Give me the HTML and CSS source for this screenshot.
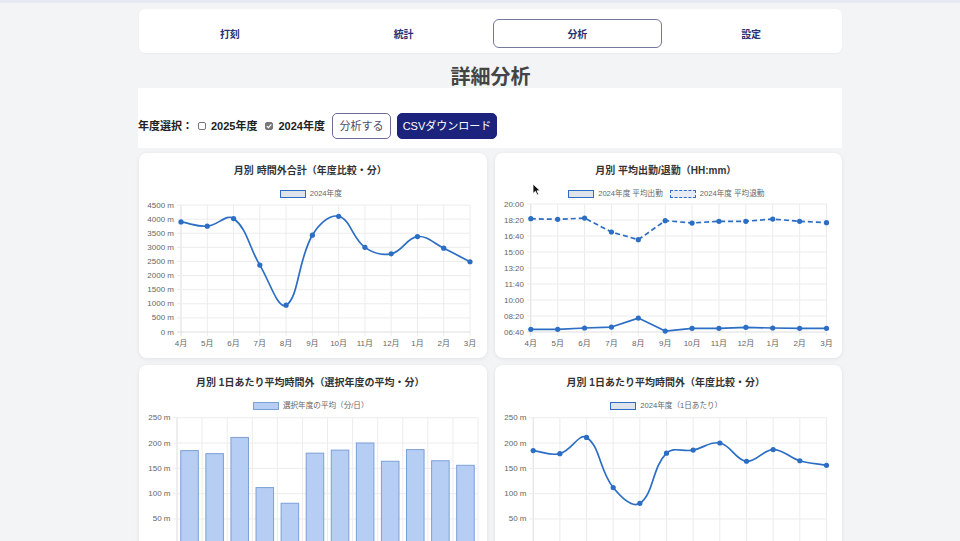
FILE: index.html
```html
<!DOCTYPE html>
<html lang="ja">
<head>
<meta charset="utf-8">
<title>詳細分析</title>
<link rel="stylesheet" href="styles.css">
</head>
<body>
<div class="page">
  <nav class="tabs">
    <div class="tab">打刻</div>
    <div class="tab">統計</div>
    <div class="tab active">分析</div>
    <div class="tab">設定</div>
  </nav>
  <h1 class="title">詳細分析</h1>
  <div class="controls">
    <span class="label">年度選択：</span>
    <label class="year"><span class="cb"></span>2025年度</label>
    <label class="year"><span class="cb checked"><svg viewBox="0 0 8 8" width="8" height="8"><path d="M1.8 4.1 L3.4 5.7 L6.3 2.4" fill="none" stroke="#fff" stroke-width="1.2"/></svg></span>2024年度</label>
    <button class="btn btn-outline">分析する</button>
    <button class="btn btn-primary">CSVダウンロード</button>
  </div>
  <div class="charts">
    <section class="card">
      <h2 class="card-title">月別 時間外合計（年度比較・分）</h2>
      <div class="legend"><span class="lg-item"><span class="lg-box"></span>2024年度</span></div>
      <svg class="plot" id="c1" viewBox="139 199 347.5 155"></svg>
    </section>
    <section class="card">
      <h2 class="card-title">月別 平均出勤/退勤（HH:mm）</h2>
      <div class="legend">
        <span class="lg-item"><span class="lg-box"></span>2024年度 平均出勤</span>
        <span class="lg-item"><span class="lg-box dashed"></span>2024年度 平均退勤</span>
      </div>
      <svg class="plot" id="c2" viewBox="494.5 199 347.5 155"></svg>
    </section>
    <section class="card">
      <h2 class="card-title">月別 1日あたり平均時間外（選択年度の平均・分）</h2>
      <div class="legend"><span class="lg-item"><span class="lg-box bar"></span>選択年度の平均（分/日）</span></div>
      <svg class="plot" id="c3" viewBox="139 411 347.5 155"></svg>
    </section>
    <section class="card">
      <h2 class="card-title">月別 1日あたり平均時間外（年度比較・分）</h2>
      <div class="legend"><span class="lg-item"><span class="lg-box"></span>2024年度（1日あたり）</span></div>
      <svg class="plot" id="c4" viewBox="494.5 411 347.5 155"></svg>
    </section>
  </div>
</div>
<div class="cursor"><svg viewBox="0 0 9 13" width="9" height="13"><path d="M1 1 L1 10.5 L3.4 8.3 L5.1 12 L6.6 11.3 L5 7.8 L8.2 7.8 Z" fill="#111" stroke="#fff" stroke-width="0.8"/></svg></div>
<script src="script.js"></script>
</body>
</html>
```

FILE: styles.css
```css
html, body {
  margin: 0;
  padding: 0;
}
body {
  background: #f3f4f6;
  border-top: 3px solid #e6e8f2;
  font-family: "Liberation Sans", "Noto Sans CJK JP", sans-serif;
  color: #222;
  overflow: hidden;
}
.page {
  width: 703px;
  margin-left: 139px;
}
.tabs {
  display: flex;
  background: #fff;
  border-radius: 6px;
  padding: 10px 4px 5px;
  margin-top: 6px;
  box-shadow: 0 1px 2px rgba(0, 0, 0, 0.04);
}
.tab {
  flex: 1;
  margin: 0 2px;
  height: 29px;
  box-sizing: border-box;
  display: flex;
  align-items: center;
  justify-content: center;
  font-size: 10px;
  font-weight: 700;
  color: #283175;
  border: 1px solid transparent;
  border-radius: 6px;
}
.tab.active {
  border-color: #77779c;
}
.title {
  margin: 13px 0 0;
  text-align: center;
  font-size: 20px;
  line-height: 22px;
  font-weight: 700;
  color: #444;
}
.controls {
  display: flex;
  align-items: center;
  background: #fff;
  padding: 25px 0 9px;
  margin-left: -1px;
}
.label {
  font-size: 11px;
  font-weight: 700;
  color: #222;
  margin-right: 5px;
  line-height: 14px;
}
.year {
  display: flex;
  align-items: center;
  font-size: 11px;
  font-weight: 700;
  color: #222;
  line-height: 14px;
  margin-right: 8px;
}
.year + .year {
  margin-right: 7px;
}
.cb {
  width: 8px;
  height: 8px;
  box-sizing: border-box;
  border: 1px solid #777;
  border-radius: 2px;
  margin-right: 5px;
  background: #fff;
  display: flex;
}
.cb.checked {
  background: #777;
  border-color: #777;
}
.cb svg {
  display: block;
  margin: -1px;
}
.btn {
  height: 26px;
  box-sizing: border-box;
  font-family: inherit;
  font-size: 11px;
  border-radius: 5px;
  padding: 0;
  line-height: 24px;
}
.btn-outline {
  width: 59px;
  background: #fff;
  border: 1px solid #6b6b98;
  color: #4c4c68;
  margin-right: 6px;
}
.btn-primary {
  width: 100px;
  background: #1b237c;
  border: 1px solid #1b237c;
  color: #fff;
}
.charts {
  display: grid;
  grid-template-columns: 1fr 1fr;
  column-gap: 8px;
  row-gap: 7px;
  margin-top: 5px;
}
.card {
  background: #fff;
  border-radius: 8px;
  box-shadow: 0 1px 4px rgba(0, 0, 0, 0.08);
  padding: 11px 0 4px;
}
.card-title {
  margin: 0;
  padding-right: 5px;
  font-size: 10px;
  line-height: 14px;
  font-weight: 700;
  text-align: center;
  color: #333;
}
.legend {
  margin-top: 11px;
  height: 10px;
  padding-right: 4px;
  display: flex;
  justify-content: center;
  gap: 7px;
  font-size: 7.6px;
  line-height: 10px;
  color: #666;
}
.lg-item {
  display: flex;
  align-items: center;
}
.lg-box {
  width: 26px;
  height: 8px;
  box-sizing: border-box;
  border: 1.5px solid #2c6ec4;
  background: #dfe4ec;
  margin-right: 4px;
}
.lg-box.dashed {
  border-style: dashed;
  background: #e8ecf2;
}
.lg-box.bar {
  background: #b6cef4;
  border: 1px solid #7ba0d8;
}
.plot {
  display: block;
  width: 100%;
  height: 155px;
}
.grid line {
  stroke: #ececec;
  stroke-width: 1;
}
.grid line.axis {
  stroke: #dddddd;
}
.tick {
  font-family: "Liberation Sans", "Noto Sans CJK JP", sans-serif;
  font-size: 8px;
  fill: #666;
}
.series {
  fill: none;
  stroke-width: 1.7;
  stroke-linejoin: round;
}
.cursor {
  position: absolute;
  left: 532px;
  top: 183px;
  line-height: 0;
}
```

FILE: script.js
```js
(function () {
  var NS = 'http://www.w3.org/2000/svg';
  var MONTHS = ['4月', '5月', '6月', '7月', '8月', '9月', '10月', '11月', '12月', '1月', '2月', '3月'];
  var BLUE = '#2c6ec4';

  function el(tag, attrs, text) {
    var e = document.createElementNS(NS, tag);
    for (var k in attrs) e.setAttribute(k, attrs[k]);
    if (text !== undefined) e.textContent = text;
    return e;
  }
  function r(n) { return Math.round(n * 100) / 100; }
  function pad(n) { return (n < 10 ? '0' : '') + n; }

  function pathFor(pts, t) {
    if (!t) {
      return pts.map(function (p, i) { return (i ? 'L' : 'M') + r(p[0]) + ',' + r(p[1]); }).join('');
    }
    var cps = pts.map(function (p, i) {
      var prev = pts[i - 1] || p, next = pts[i + 1] || p;
      var d01 = Math.sqrt(Math.pow(p[0] - prev[0], 2) + Math.pow(p[1] - prev[1], 2));
      var d12 = Math.sqrt(Math.pow(next[0] - p[0], 2) + Math.pow(next[1] - p[1], 2));
      var s01 = d01 / (d01 + d12), s12 = d12 / (d01 + d12);
      if (!isFinite(s01)) s01 = 0;
      if (!isFinite(s12)) s12 = 0;
      var fa = t * s01, fb = t * s12;
      var dx = next[0] - prev[0], dy = next[1] - prev[1];
      return { a: [p[0] - fa * dx, p[1] - fa * dy], b: [p[0] + fb * dx, p[1] + fb * dy] };
    });
    var d = 'M' + r(pts[0][0]) + ',' + r(pts[0][1]);
    for (var i = 1; i < pts.length; i++) {
      var c1 = cps[i - 1].b, c2 = cps[i].a;
      d += 'C' + r(c1[0]) + ',' + r(c1[1]) + ' ' + r(c2[0]) + ',' + r(c2[1]) + ' ' + r(pts[i][0]) + ',' + r(pts[i][1]);
    }
    return d;
  }

  function draw(cfg) {
    var svg = document.getElementById(cfg.id);
    if (!svg) return;
    var n = MONTHS.length;
    var bar = cfg.type === 'bar';
    var w = (cfg.x1 - cfg.x0) / (bar ? n : n - 1);
    var xs = MONTHS.map(function (m, i) { return cfg.x0 + (bar ? (i + 0.5) * w : i * w); });
    function yOf(v) { return cfg.yBot - (v - cfg.vMin) / (cfg.vMax - cfg.vMin) * (cfg.yBot - cfg.yTop); }

    var grid = el('g', { 'class': 'grid' });
    var labels = el('g', {});
    var vcount = bar ? n + 1 : n;
    for (var i = 0; i < vcount; i++) {
      var gx = r(cfg.x0 + i * w);
      grid.appendChild(el('line', { x1: gx, x2: gx, y1: cfg.yTop, y2: cfg.yBot + 4, 'class': i === 0 ? 'axis' : '' }));
    }
    for (var v = cfg.vMin; v <= cfg.vMax + 0.001; v += cfg.step) {
      var gy = r(yOf(v));
      grid.appendChild(el('line', { x1: cfg.x0 - 4, x2: cfg.x1, y1: gy, y2: gy, 'class': v === cfg.vMin ? 'axis' : '' }));
      labels.appendChild(el('text', { x: cfg.labelRight, y: gy, 'text-anchor': 'end', 'dominant-baseline': 'central', 'class': 'tick' }, cfg.fmt(v)));
    }
    MONTHS.forEach(function (m, i) {
      labels.appendChild(el('text', { x: r(xs[i]), y: cfg.xLabelY, 'text-anchor': 'middle', 'dominant-baseline': 'central', 'class': 'tick' }, m));
    });
    svg.appendChild(grid);

    cfg.series.forEach(function (s) {
      if (bar) {
        var bw = w * 0.7;
        s.data.forEach(function (val, i) {
          var top = yOf(val);
          svg.appendChild(el('rect', {
            x: r(xs[i] - bw / 2), y: r(top), width: r(bw), height: r(yOf(0) - top),
            fill: '#b6cef4', stroke: '#7ba0d8', 'stroke-width': 1
          }));
        });
        return;
      }
      var pts = s.data.map(function (val, i) { return [xs[i], yOf(val)]; });
      var attrs = { d: pathFor(pts, s.tension), 'class': 'series', stroke: BLUE };
      if (s.dash) attrs['stroke-dasharray'] = s.dash;
      svg.appendChild(el('path', attrs));
      pts.forEach(function (p) {
        svg.appendChild(el('circle', { cx: r(p[0]), cy: r(p[1]), r: 2.6, fill: BLUE }));
      });
    });
    svg.appendChild(labels);
  }

  var perDay = [185, 179, 211, 112, 81, 180, 186, 200, 164, 187, 165, 156];
  function mins(v) { return v + ' m'; }
  function hhmm(v) { return pad(Math.floor(v / 60)) + ':' + pad(v % 60); }

  draw({
    id: 'c1', type: 'line', x0: 181, x1: 470, yTop: 205, yBot: 332,
    vMin: 0, vMax: 4500, step: 500, fmt: mins, labelRight: 174, xLabelY: 343.5,
    series: [{ data: [3900, 3750, 4020, 2370, 950, 3430, 4100, 3000, 2770, 3380, 2970, 2490], tension: 0.4 }]
  });
  draw({
    id: 'c2', type: 'line', x0: 530.3, x1: 826, yTop: 204, yBot: 332,
    vMin: 400, vMax: 1200, step: 100, fmt: hhmm, labelRight: 523.5, xLabelY: 343.5,
    series: [
      { data: [417, 417, 425, 431, 487, 406, 423, 423, 429, 425, 423, 423], tension: 0 },
      { data: [1108, 1104, 1112, 1025, 977, 1096, 1081, 1092, 1092, 1106, 1092, 1083], tension: 0, dash: '5 3' }
    ]
  });
  draw({
    id: 'c3', type: 'bar', x0: 177, x1: 478, yTop: 417.7, yBot: 544.3,
    vMin: 0, vMax: 250, step: 50, fmt: mins, labelRight: 170.5, xLabelY: 556,
    series: [{ data: perDay }]
  });
  draw({
    id: 'c4', type: 'line', x0: 532.7, x1: 826, yTop: 417.7, yBot: 544.3,
    vMin: 0, vMax: 250, step: 50, fmt: mins, labelRight: 526, xLabelY: 556,
    series: [{ data: perDay, tension: 0.4 }]
  });
})();
```
